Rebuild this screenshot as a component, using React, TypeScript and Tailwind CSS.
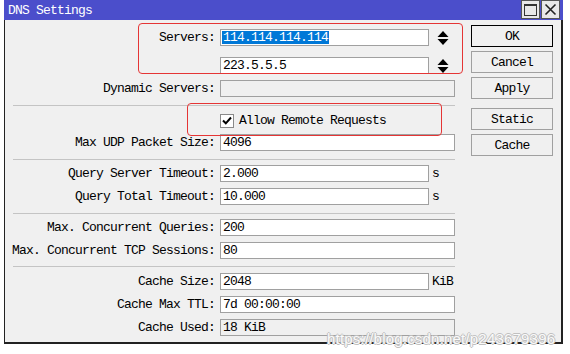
import React from 'react';

const mono = { fontFamily: '"Liberation Mono", "Courier New", Cousine, monospace' };

function Field({
  value,
  short,
  unit,
  disabled,
  selected
}: {
  value?: string;
  short?: boolean;
  unit?: string;
  disabled?: boolean;
  selected?: boolean;
}) {
  return (
    <div className="flex items-center">
      <div
        className={
          'h-[17px] border border-[#a0a0a0] flex items-center px-[1px] text-[13px] leading-none tracking-[-0.8px] text-black overflow-hidden ' +
          (short ? 'w-[209px] ' : 'w-[235px] ') +
          (disabled ? 'bg-[#f0f0f0]' : 'bg-white')
        }
      >
        {selected ? (
          <span className="bg-[#0078d7] text-white h-[13px] flex items-center pl-[1px] pr-[1px]">{value}</span>
        ) : (
          <span className="pl-[1px]">{value}</span>
        )}
      </div>
      {unit && <span className="ml-[3px] text-[13px] leading-none tracking-[-0.8px]">{unit}</span>}
    </div>
  );
}

function Row({ label, mt, children }: { label?: string; mt: string; children: React.ReactNode }) {
  return (
    <div className={'flex items-center h-[17px] ' + mt}>
      <div className="w-[211px] text-right text-[13px] leading-none tracking-[-0.8px] pr-[1px] whitespace-nowrap">{label}</div>
      <div className="ml-[4px]">{children}</div>
    </div>
  );
}

function Spin() {
  return (
    <svg width="12" height="16" viewBox="0 0 12 16" className="ml-[8px]">
      <path d="M6 1 L11.5 7 L0.5 7 Z" fill="#000" />
      <path d="M6 15 L11.5 9 L0.5 9 Z" fill="#000" />
    </svg>
  );
}

function Sep({ mt }: { mt: string }) {
  return <div className={'ml-[8px] w-[442px] h-[1px] bg-[#c4c4c4] ' + mt} />;
}

function Btn({ label, mt, primary }: { label: string; mt: string; primary?: boolean }) {
  return (
    <div
      className={
        'w-[82px] h-[22px] flex items-center justify-center bg-[#f0f0f0] text-[13px] leading-none tracking-[-0.8px] ' +
        mt +
        (primary ? ' border border-black' : ' border border-[#a0a0a0]')
      }
    >
      {label}
    </div>
  );
}

export default function App() {
  return (
    <div className="w-[570px] h-[354px] bg-white relative overflow-hidden text-black" style={mono}>
      {/* Window */}
      <div className="ml-[4px] w-[559px] h-[344px] border-l border-r-2 border-b-2 border-[#222] bg-[#f0f0f0] flex flex-col">
        {/* Title bar */}
        <div className="h-[20px] bg-[#4b4ecb] flex items-center justify-between pl-[4px] -ml-[1px] -mr-[2px]">
          <span className="text-white text-[13px] leading-none tracking-[-0.8px]">DNS Settings</span>
          <div className="flex h-[20px] items-start mr-[3px]">
            <div className="w-[19px] h-[19px] bg-[#e8e8e8] border border-[#555] flex items-center justify-center">
              <div className="w-[13px] h-[12px] border border-[#333] border-t-2" />
            </div>
            <div className="w-[19px] h-[19px] ml-[1px] bg-[#e8e8e8] border border-[#555] flex items-center justify-center">
              <svg width="13" height="13" viewBox="0 0 13 13">
                <path d="M1.5 1.5 L11.5 11.5 M11.5 1.5 L1.5 11.5" stroke="#222" strokeWidth="1.6" />
              </svg>
            </div>
          </div>
        </div>

        {/* Body */}
        <div className="flex flex-1">
          <div className="flex flex-col w-[462px]">
            <Row label="Servers:" mt="mt-[9px]">
              <div className="flex items-center">
                <Field value="114.114.114.114" short selected />
                <Spin />
              </div>
            </Row>
            <Row mt="mt-[11px]">
              <div className="flex items-center">
                <Field value="223.5.5.5" short />
                <Spin />
              </div>
            </Row>
            <Row label="Dynamic Servers:" mt="mt-[6px]">
              <Field disabled />
            </Row>
            <Sep mt="mt-[8px]" />
            <Row mt="mt-[6px]">
              <div className="flex items-center text-[13px] leading-none tracking-[-0.8px]">
                <div className="w-[14px] h-[14px] bg-white border border-[#8a8a8a] flex items-center justify-center">
                  <svg width="10" height="9" viewBox="0 0 10 9">
                    <path d="M1 4.5 L3.8 7.3 L9 1.5" stroke="#000" strokeWidth="2" fill="none" />
                  </svg>
                </div>
                <span className="ml-[5px]">Allow Remote Requests</span>
              </div>
            </Row>
            <Row label="Max UDP Packet Size:" mt="mt-[5px]">
              <Field value="4096" />
            </Row>
            <Sep mt="mt-[8px]" />
            <Row label="Query Server Timeout:" mt="mt-[5px]">
              <Field value="2.000" short unit="s" />
            </Row>
            <Row label="Query Total Timeout:" mt="mt-[6px]">
              <Field value="10.000" short unit="s" />
            </Row>
            <Sep mt="mt-[8px]" />
            <Row label="Max. Concurrent Queries:" mt="mt-[5px]">
              <Field value="200" />
            </Row>
            <Row label="Max. Concurrent TCP Sessions:" mt="mt-[6px]">
              <Field value="80" />
            </Row>
            <Sep mt="mt-[7px]" />
            <Row label="Cache Size:" mt="mt-[6px]">
              <Field value="2048" short unit="KiB" />
            </Row>
            <Row label="Cache Max TTL:" mt="mt-[6px]">
              <Field value="7d 00:00:00" />
            </Row>
            <Row label="Cache Used:" mt="mt-[6px]">
              <Field value="18 KiB" disabled />
            </Row>
          </div>

          <div className="flex flex-col ml-[4px]">
            <Btn label="OK" mt="mt-[5px]" primary />
            <Btn label="Cancel" mt="mt-[4px]" />
            <Btn label="Apply" mt="mt-[4px]" />
            <Btn label="Static" mt="mt-[9px]" />
            <Btn label="Cache" mt="mt-[4px]" />
          </div>
        </div>
      </div>

      {/* Annotation boxes */}
      <div className="absolute left-[138px] top-[23px] w-[325px] h-[51px] border border-[#e53535] rounded-[4px] pointer-events-none" />
      <div className="absolute left-[187px] top-[103px] w-[255px] h-[33px] border border-[#e53535] rounded-[4px] pointer-events-none" />

      {/* Watermark */}
      <div
        className="absolute left-[327px] top-[331px] text-[15px] leading-none text-[#fafafa] tracking-[0.2px]"
        style={{
          fontFamily: '"Liberation Sans", Arial, sans-serif',
          textShadow: '1px 0 0 #c0c0c0, -1px 0 0 #c0c0c0, 0 1px 0 #c0c0c0, 0 -1px 0 #c0c0c0'
        }}
      >
        https://blog.csdn.net/p243679396
      </div>
    </div>
  );
}
